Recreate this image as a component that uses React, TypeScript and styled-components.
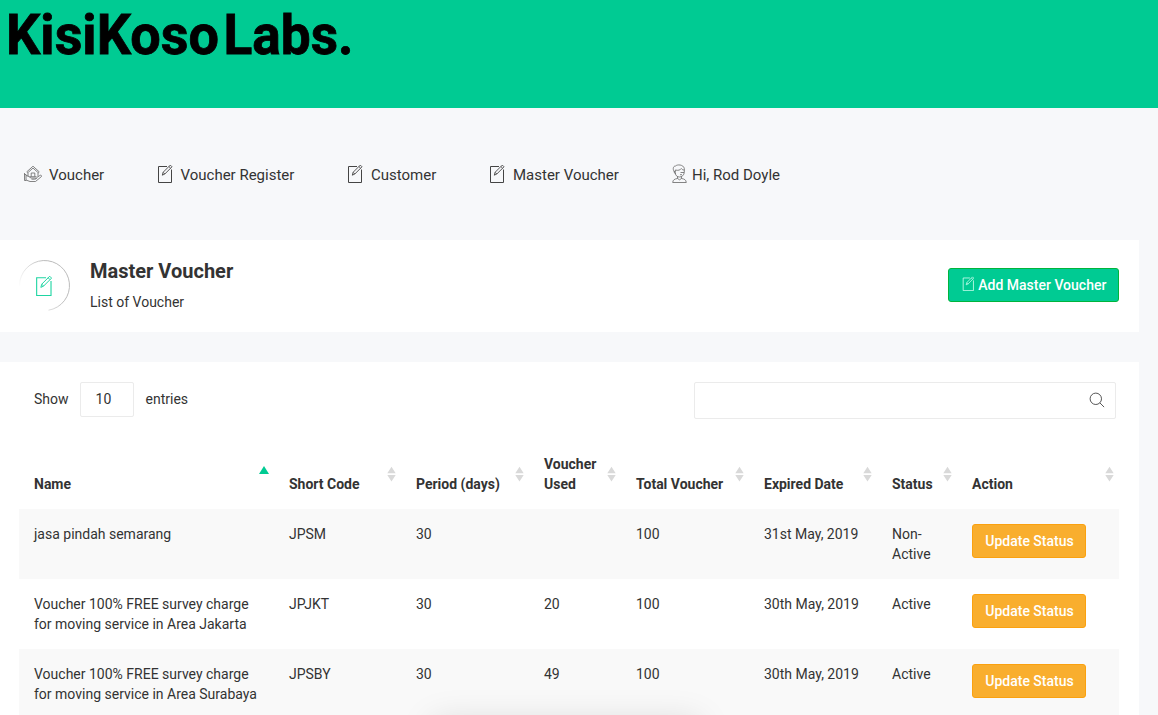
import React from "react";
import styled, { createGlobalStyle } from "styled-components";

const Global = createGlobalStyle`
  * { box-sizing: border-box; }
  html, body { margin: 0; height: 715px; overflow: hidden; }
  body { background: #f7f8fa; font-family: Roboto, "Liberation Sans", sans-serif; font-size: 14px; line-height: 20px; color: #333; }
`;

const Page = styled.div`
  position: relative;
  height: 715px;
  overflow: hidden;
`;
const Banner = styled.header`
  height: 108px;
  background: #00cb93;
`;
const Nav = styled.nav`
  display: flex;
  align-items: center;
  height: 132px;
  padding: 2px 0 0 24px;
`;
const NavItem = styled.a<{ $width: number; $gap?: number }>`
  display: flex;
  align-items: center;
  flex: none;
  width: ${(p) => p.$width}px;
  gap: ${(p) => p.$gap ?? 7}px;
  font-size: 15px;
  white-space: nowrap;
  svg { flex: none; margin-bottom: 3px; }
`;
const TitleCard = styled.section`
  display: flex;
  align-items: center;
  width: 1139px;
  height: 92px;
  padding: 0 20px 2px 19px;
  margin-bottom: 30px;
  background: #fff;
`;
const Badge = styled.div`
  display: grid;
  width: 51px;
  height: 51px;
  margin-right: 20px;
  svg { grid-area: 1 / 1; place-self: center; }
  svg + svg { margin-right: 2px; }
`;
const Titles = styled.div`
  flex: 1;
  padding-top: 1px;
`;
const Title = styled.h1`
  margin: 0 0 9px;
  font-size: 20px;
  line-height: 24px;
  font-weight: 700;
`;
const Subtitle = styled.p`
  margin: 0;
`;
const Button = styled.button<{ $tone: "green" | "amber"; $width: number }>`
  display: flex;
  align-items: center;
  justify-content: center;
  gap: 4px;
  width: ${(p) => p.$width}px;
  height: 34px;
  padding: 0 0 0 1px;
  border: 1px solid ${(p) => (p.$tone === "green" ? "#00b53c" : "#fba10f")};
  border-radius: 3px;
  background: ${(p) => (p.$tone === "green" ? "#00cb93" : "#f9ae2e")};
  color: #fff;
  font: 500 14px/20px Roboto, sans-serif;
  white-space: nowrap;
  svg { margin-bottom: 3px; }
`;
const TableCard = styled.section`
  width: 1139px;
  height: 400px;
  padding: 20px 20px 0 19px;
  background: #fff;
`;
const Controls = styled.div`
  display: flex;
  justify-content: space-between;
  align-items: flex-start;
  height: 72px;
  padding: 0 3px 0 15px;
`;
const Length = styled.label`
  display: flex;
  align-items: flex-start;
  line-height: 34px;
`;
const LengthBox = styled.span`
  width: 54px;
  height: 35px;
  margin: 0 12px 0 11px;
  padding: 0 15px;
  line-height: 32px;
  border: 1px solid #ebebeb;
  border-radius: 2px;
`;
const Search = styled.div`
  display: flex;
  align-items: center;
  justify-content: flex-end;
  width: 422px;
  height: 37px;
  padding: 0 10px 2px 0;
  border: 1px solid #ebebeb;
  border-radius: 2px;
`;
const Row = styled.div<{ $striped?: boolean }>`
  display: grid;
  grid-template-columns: 255px 127px 128px 92px 128px 128px 80px 162px;
  height: 70px;
  background: ${(p) => (p.$striped ? "#f9f9f9" : "#fff")};
`;
const HeadRow = styled(Row)`
  height: 55px;
  font-weight: 700;
`;
const HeadCell = styled.div`
  display: flex;
  justify-content: space-between;
  align-items: flex-end;
  padding: 0 5px 15px 15px;
  svg { flex: none; align-self: flex-start; margin-top: 12px; }
`;
const Cell = styled.div`
  padding: 15px 0 0 15px;
  white-space: pre-line;
`;
const DockShadow = styled.div`
  position: absolute;
  left: 436px;
  top: 725px;
  width: 260px;
  height: 20px;
  box-shadow: 0 0 34px 4px rgba(0, 0, 0, 0.13);
`;

const Logo = () => (
  <svg width="380" height="80" viewBox="0 0 380 80" fontFamily="Roboto, sans-serif" fontWeight="700" fontSize="55.5" stroke="#000" strokeWidth="0.8">
    <text x="6" y="54.300" textLength="213" lengthAdjust="spacingAndGlyphs">KisiKoso</text>
    <text x="223.500" y="54.300" textLength="130" lengthAdjust="spacingAndGlyphs">Labs.</text>
  </svg>
);

const EditIcon = ({ size = 19, color = "#444" }: { size?: number; color?: string }) => (
  <svg width={(size * 16) / 19} height={size} viewBox="0 0 16 19" fill="none" stroke={color} strokeWidth="1">
    <path d="M10 2.500H1.500v16h13V5.500" />
    <path strokeWidth="0.9" d="M5.300 11.200l.8-2.900 7.200-7.200 1.700 1.700-7.200 7.200zM11.900 2.500l1.700 1.700M6.200 8.500l1.700 1.500" />
  </svg>
);

const HouseIcon = () => (
  <svg width="18" height="18" viewBox="0 0 18 18" fill="none" stroke="#666" strokeWidth="0.8">
    <path d="M2.800 6.800L9 1.200l6.200 5.600-.9 1L9 3.100 3.700 7.800zM4 8v3.500M14 8v3.500M7.200 11.500V8h3.600v3.500M5.500 11.700h7" />
    <path d="M.5 8v7.500M.5 9.500h1.500v6H.5M2 15l4 1.500h5.500l6-5c.3-1.200-.8-1.700-1.700-1l-3.300 2.300c0 1-.8 1.400-1.800 1.400H7.500M2 10.500l2 .5 3 2h4c.9 0 1.300.4 1.500 1" />
  </svg>
);

const UserIcon = () => (
  <svg width="15" height="19" viewBox="0 0 15 19" fill="none" stroke="#666" strokeWidth="0.8">
    <path d="M2.800 8.500C.5 6 .8 2 3.500 2 5 .3 11.500.3 12.300 4.500v3.500M3.300 6c3 .8 5 0 6-1.500.8 1 1.500 1.500 3 1.500M3.300 6v2.500c0 3 1.900 4.500 4.200 4.500s4.800-1.800 4.800-5M2.800 7c-1.200 1 0 3 .9 3M8.500 8.500h3.500M8 10.700h2" />
    <path d="M5.500 12.500v2c-3 .5-4.600 1.300-4.800 4h13.600c-.3-2.700-1.800-3.500-4.800-4v-2M5.500 14.500l2 1.300 2-1.300" />
  </svg>
);

const SearchIcon = () => (
  <svg width="16" height="16" viewBox="0 0 16 16" fill="none" stroke="#444" strokeWidth="0.9">
    <circle cx="6.800" cy="6.800" r="5.700" />
    <path d="M10.900 10.900l4.200 4.200" />
  </svg>
);

const SortIcon = ({ sorted }: { sorted?: boolean }) =>
  sorted ? (
    <svg width="10" height="17" viewBox="0 0 10 17"><path d="M0 8L5 0 10 8z" fill="#00cb93" /></svg>
  ) : (
    <svg width="9" height="17" viewBox="0 0 9 17" fill="#d9d9d9"><path d="M.3 7.200L4.500.8l4.200 6.400zM.3 9h8.400l-4.200 6.600z" /></svg>
  );

const heads = ["Name", "Short Code", "Period (days)", "Voucher Used", "Total Voucher", "Expired Date", "Status", "Action"];
const rows = [
  ["jasa pindah semarang", "JPSM", "30", "", "100", "31st May, 2019", "Non-\nActive"],
  ["Voucher 100% FREE survey charge\nfor moving service in Area Jakarta", "JPJKT", "30", "20", "100", "30th May, 2019", "Active"],
  ["Voucher 100% FREE survey charge\nfor moving service in Area Surabaya", "JPSBY", "30", "49", "100", "30th May, 2019", "Active"],
];

export default function App() {
  return (
    <Page>
      <Global />
      <Banner><Logo /></Banner>
      <Nav>
        <NavItem $width={133}><HouseIcon />Voucher</NavItem>
        <NavItem $width={190} $gap={7.5}><EditIcon />Voucher Register</NavItem>
        <NavItem $width={142} $gap={8}><EditIcon />Customer</NavItem>
        <NavItem $width={183} $gap={8}><EditIcon />Master Voucher</NavItem>
        <NavItem $width={120} $gap={5}><UserIcon />Hi, Rod Doyle</NavItem>
      </Nav>
      <TitleCard>
        <Badge>
          <svg width="51" height="51" viewBox="0 0 51 51" fill="none">
            <defs>
              <linearGradient id="ring" x1="0" y1="0.75" x2="0.7" y2="0.4">
                <stop offset="0.1" stopColor="#bbb" stopOpacity="0" />
                <stop offset="1" stopColor="#bbb" />
              </linearGradient>
            </defs>
            <path d="M.5 25.500a25 25 0 1 1 29 24.700" stroke="url(#ring)" />
          </svg>
          <EditIcon size={21} color="#1fd5a2" />
        </Badge>
        <Titles>
          <Title>Master Voucher</Title>
          <Subtitle>List of Voucher</Subtitle>
        </Titles>
        <Button $tone="green" $width={171}><EditIcon size={15} color="#d5fff2" />Add Master Voucher</Button>
      </TitleCard>
      <TableCard>
        <Controls>
          <Length>Show <LengthBox>10</LengthBox> entries</Length>
          <Search><SearchIcon /></Search>
        </Controls>
        <HeadRow>
          {heads.map((h, i) => (
            <HeadCell key={h}>{h}<SortIcon sorted={i === 0} /></HeadCell>
          ))}
        </HeadRow>
        {rows.map((r, i) => (
          <Row key={i} $striped={i % 2 === 0}>
            {r.map((c, j) => <Cell key={j}>{c}</Cell>)}
            <Cell><Button $tone="amber" $width={114}>Update Status</Button></Cell>
          </Row>
        ))}
      </TableCard>
      <DockShadow />
    </Page>
  );
}
